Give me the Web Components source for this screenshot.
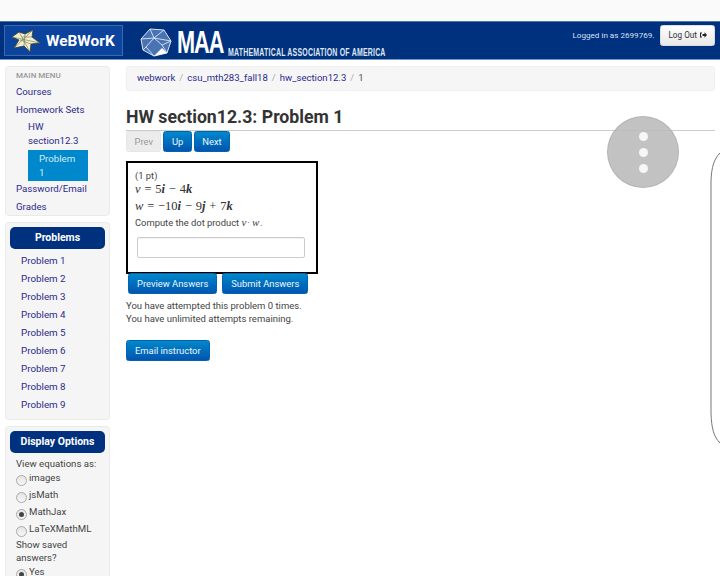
<!DOCTYPE html>
<html>
<head>
<meta charset="utf-8">
<title>WeBWorK</title>
<style>
    html, body { margin: 0; height: 576px; overflow: hidden; background: #fff; }
    body { font-family: Roboto, "Liberation Sans", sans-serif; font-size: 10px; color: #333; position: relative; }
    .columns { display: grid; grid-template-columns: 105px 1fr; column-gap: 16px; padding: 0 5px; }
</style>
</head>
<body>
<wb-header></wb-header>
<div class="columns">
    <wb-sidebar>
        <wb-well>
            <wb-main-menu></wb-main-menu>
        </wb-well>
        <wb-well heading="Problems">
            <wb-problem-list count="9"></wb-problem-list>
        </wb-well>
        <wb-well heading="Display Options">
            <wb-display-options></wb-display-options>
        </wb-well>
    </wb-sidebar>
    <wb-main></wb-main>
</div>
<wb-overlay></wb-overlay>

<template id="wb-header-template">
    <style>
        :host { display: block; padding-top: 21px; background: #fafafa; color: #fff; }
        .bar { display: flex; align-items: flex-start; height: 39px; padding: 3px 5px 0 4px; box-sizing: border-box; background: #00317f; border-top: 1px solid #4a77ab; border-bottom: 1px solid #6f9ac8; }
        .brand { display: flex; align-items: center; width: 119px; height: 31px; box-sizing: border-box; background: #0b439d; border: 1px solid #3a69ad; flex: none; }
        .brand svg { margin-left: 6px; flex: none; }
        .brand span { font: 700 15.4px Roboto, sans-serif; margin-left: 5px; }
        .maa { display: flex; align-items: flex-end; margin-left: 17px; height: 33px; flex: none; }
        .maa b { font: 700 31px/31px "Liberation Sans", sans-serif; display: inline-block; width: 46px; margin-left: 5px; transform: scaleX(.7); transform-origin: left bottom; letter-spacing: -1.5px; white-space: nowrap; }
        .maa small { font: 700 10.5px/11px "Liberation Sans", sans-serif; color: #dfe7f2; display: inline-block; width: 159px; white-space: nowrap; transform: scaleX(.665); transform-origin: left bottom; margin-left: 5px; letter-spacing: .3px; }
        .user { margin-left: auto; display: flex; align-items: flex-start; }
        .user span { font-size: 8.1px; color: #d5e2f2; margin-top: 5px; margin-right: 6px; }
        .user svg { margin-left: 1px; }
    </style>
    <div class="bar">
        <div class="brand">
            <svg width="30" height="24" viewBox="0 0 30 24">
                <path d="M8 3 L14 5 L22 1 L21 8 L29 14 L20 15 L19 23 L13 17 L3 19 L8 11 L1 8 Z" fill="#f2eecd" stroke="#39402f" stroke-width=".8"/>
                <path d="M8 3 L19 23 M22 1 L3 19 M1 8 L29 14 M14 5 L13 17 M9 11 L20 15 M11 8 L21 8" stroke="#6d7353" stroke-width=".6" fill="none"/>
            </svg>
            <span>WeBWorK</span>
        </div>
        <div class="maa">
            <svg width="32" height="30" viewBox="0 0 32 30">
                <path d="M10 1 L24 2 L31 13 L27 25 L14 28 L3 22 L1 11 Z" fill="#4a73b4" stroke="#dce6f4" stroke-width="1"/>
                <path d="M10 1 L14 10 L24 2 M14 10 L31 13 M14 10 L1 11 M14 10 L6 19 L3 22 M6 19 L14 28 M22 17 L27 25 M14 10 L22 17 L31 13" stroke="#dce6f4" stroke-width=".9" fill="none"/>
                <path d="M14 28 L22 20 L27 25 Z" fill="#fff"/>
            </svg>
            <b>MAA</b>
            <small>MATHEMATICAL ASSOCIATION OF AMERICA</small>
        </div>
        <div class="user">
            <span>Logged in as 2699769.</span>
            <wb-button variant="light">Log Out <svg width="7" height="6" viewBox="0 0 7 6"><path d="M0 .5h2v1H1v3h1v1H0z M2.5 2h2V.3L7 3 4.5 5.7V4h-2z" fill="#222"/></svg></wb-button>
        </div>
    </div>
</template>

<template id="wb-button-template">
    <style>
        :host { display: inline-block; flex: none; }
        button { display: block; font: 400 9.4px/1 Roboto, sans-serif; height: 21px; padding: 0 8px; border-radius: 2.5px; border: 1px solid #0164ad; color: #eef6fc; background: linear-gradient(#0088cc, #0055b0); white-space: nowrap; cursor: pointer; }
        :host([compact]) button { padding: 0 7.5px; }
        :host([variant="light"]) button { height: 21px; font-size: 8.2px; padding: 0 7px; color: #333; border: 1px solid #ddd; background: linear-gradient(#fff, #e8e8e8); }
        :host([variant="disabled"]) button { color: #999; border: 1px solid #e6e6e6; background: #ececec; }
    </style>
    <button part="button"><slot></slot></button>
</template>

<template id="wb-sidebar-template">
    <style>
        :host { display: flex; flex-direction: column; gap: 6px; padding-top: 6px; }
    </style>
    <slot></slot>
</template>

<template id="wb-well-template">
    <style>
        :host { display: block; box-sizing: border-box; background: #f5f5f5; border: 1px solid #eaeaea; border-radius: 4px; padding: 3px 4px 0; }
        .head { display: none; height: 22px; margin: 0 0 3px; background: #00317f; color: #fff; border-radius: 5px; font: 700 10.5px/22px Roboto, sans-serif; text-align: center; }
        :host([heading]) { padding-top: 4px; padding-bottom: 5px; }
        :host([heading]) .head { display: block; }
    </style>
    <div class="head" id="head"></div>
    <slot></slot>
</template>

<template id="wb-main-menu-template">
    <style>
        :host { display: block; font-size: 9.7px; }
        .title { font-size: 8px; font-weight: 500; color: #999; line-height: 11px; padding-left: 6px; margin-bottom: 2px; }
        a { display: block; color: #2b2a8c; text-decoration: none; line-height: 13.5px; padding: 2px 6px; }
        .sub { padding-left: 18px; width: 45px; }
        .active { margin: 1px 0 -1px 18px; width: 60px; box-sizing: border-box; background: #0088cc; color: #d5ecf8; padding: 2px 11px; }
    </style>
    <div class="title">MAIN MENU</div>
    <a href="#">Courses</a>
    <a href="#">Homework Sets</a>
    <a href="#" class="sub">HW section12.3</a>
    <a href="#" class="active">Problem 1</a>
    <a href="#">Password/Email</a>
    <a href="#">Grades</a>
</template>

<template id="wb-problem-list-template">
    <style>
        :host { display: block; font-size: 9.8px; }
        a { display: block; color: #2b2a8c; text-decoration: none; line-height: 18px; padding-left: 11px; }
    </style>
    <div id="list"></div>
</template>

<template id="wb-display-options-template">
    <style>
        :host { display: block; font-size: 9.6px; color: #444; line-height: 13.5px; padding: 1px 0 0 6px; }
        label { display: flex; align-items: flex-start; height: 17px; }
        i { width: 9px; height: 9px; margin-top: 4px; margin-right: 2px; border-radius: 50%; border: 1px solid #aaa; background: linear-gradient(#e4e4e4, #f6f6f6); flex: none; position: relative; }
        label.on i::after { content: ''; position: absolute; left: 2px; top: 2px; width: 5px; height: 5px; border-radius: 50%; background: #444; }
        .gap { margin-top: -1px; }
    </style>
    <div>View equations as:</div>
    <label><i></i>images</label>
    <label><i></i>jsMath</label>
    <label class="on"><i></i>MathJax</label>
    <label><i></i>LaTeXMathML</label>
    <div class="gap">Show saved answers?</div>
    <label class="on"><i></i>Yes</label>
</template>

<template id="wb-main-template">
    <style>
        :host { display: block; padding-top: 6px; min-width: 0; }
        nav { height: 25px; box-sizing: border-box; background: #f6f6f6; border: 1px solid #f0f0f0; border-radius: 3px; padding-left: 10px; font-size: 9.55px; line-height: 21px; color: #aaa; display: flex; gap: 4px; margin-right: 0; }
        nav a { color: #2b2a8c; text-decoration: none; }
        nav em { font-style: normal; color: #555; }
        h1 { font: 700 17.7px/22px Roboto, sans-serif; color: #333; margin: 15px 0 0; height: 24px; border-bottom: 1px solid #ccc; box-sizing: content-box; }
        .pager { display: flex; gap: 2px; height: 21px; }
        .actions { display: flex; gap: 5px; padding-left: 2px; margin-top: -1px; position: relative; }
        p { margin: 0; font-size: 9.5px; line-height: 13px; color: #444; }
        .status { margin-top: 5px; }
        .mail { margin-top: 15px; }
    </style>
    <nav><a href="#">webwork</a><span>/</span><a href="#">csu_mth283_fall18</a><span>/</span><a href="#">hw_section12.3</a><span>/</span><em>1</em></nav>
    <h1>HW section12.3: Problem 1</h1>
    <div class="pager">
        <wb-button variant="disabled" compact>Prev</wb-button>
        <wb-button compact>Up</wb-button>
        <wb-button compact>Next</wb-button>
    </div>
    <wb-problem></wb-problem>
    <div class="actions">
        <wb-button>Preview Answers</wb-button>
        <wb-button>Submit Answers</wb-button>
    </div>
    <div class="status">
        <p>You have attempted this problem 0 times.</p>
        <p>You have unlimited attempts remaining.</p>
    </div>
    <div class="mail"><wb-button>Email instructor</wb-button></div>
</template>

<template id="wb-problem-template">
    <style>
        :host { display: block; width: 192px; height: 113px; box-sizing: border-box; margin-top: 9px; border: 2px solid #000; padding: 7px 7px 0 7px; font-size: 9.4px; color: #444; background: #fff; }
        .pt { line-height: 11px; }
        .math { font: 12.500px/16.500px "Liberation Serif", serif; color: #333; white-space: nowrap; word-spacing: .7px; }
        .math i { font-style: italic; }
        .math b { font-style: italic; font-weight: 700; }
        .q { margin-top: 2px; line-height: 13px; }
        .q i { font: italic 11px "Liberation Serif", serif; letter-spacing: .8px; }
        .answer { display: block; width: 168px; height: 21px; box-sizing: border-box; margin: 8px 0 0 2px; border: 1px solid #ccc; border-radius: 2px; background: #fff; box-shadow: inset 0 1px 1px rgba(0,0,0,.06); }
    </style>
    <div class="pt">(1 pt)</div>
    <div class="math"><i>v</i> = 5<b>i</b> − 4<b>k</b></div>
    <div class="math"><i>w</i> = −10<b>i</b> − 9<b>j</b> + 7<b>k</b></div>
    <div class="q">Compute the dot product <i>v</i>· <i>w</i>.</div>
    <input class="answer" type="text">
</template>

<template id="wb-overlay-template">
    <style>
        :host { display: block; position: absolute; inset: 0; pointer-events: none; }
        .fab { position: absolute; left: 607px; top: 116px; width: 72px; height: 72px; box-sizing: border-box; border-radius: 50%; background: rgba(186,186,186,.88); border: 1px solid rgba(170,170,170,.6); display: flex; flex-direction: column; align-items: center; justify-content: center; gap: 7px; }
        .fab span { width: 9px; height: 9px; border-radius: 50%; background: #f6f6f6; }
        svg { position: absolute; left: 700px; top: 145px; }
    </style>
    <div class="fab"><span></span><span></span><span></span></div>
    <svg width="20" height="305" viewBox="0 0 20 305"><path d="M20 8 C14 14 11.500 22 11 36 L11 268 C11.500 284 14 292 20 298" fill="none" stroke="#777" stroke-width="1"/></svg>
</template>

<script>
    (function () {
        function define(name, init) {
            const tpl = document.getElementById(name + '-template');
            customElements.define(name, class extends HTMLElement {
                constructor() {
                    super();
                    this.attachShadow({ mode: 'open' });
                    this.shadowRoot.appendChild(tpl.content.cloneNode(true));
                }
                connectedCallback() {
                    if (init) init(this);
                }
            });
        }

        define('wb-header');
        define('wb-button');
        define('wb-sidebar');
        define('wb-well', function (el) {
            el.shadowRoot.getElementById('head').textContent = el.getAttribute('heading') || '';
        });
        define('wb-main-menu');
        define('wb-problem-list', function (el) {
            const list = el.shadowRoot.getElementById('list');
            const count = Number(el.getAttribute('count'));
            list.textContent = '';
            for (let i = 1; i <= count; i++) {
                const a = document.createElement('a');
                a.href = '#';
                a.textContent = 'Problem ' + i;
                list.appendChild(a);
            }
        });
        define('wb-display-options');
        define('wb-main');
        define('wb-problem');
        define('wb-overlay');
    })();
</script>
</body>
</html>
